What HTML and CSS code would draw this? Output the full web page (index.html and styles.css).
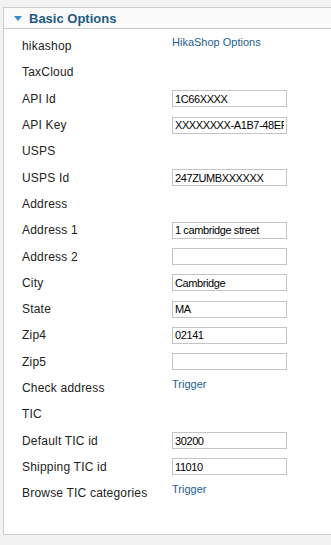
FILE: index.html
```html
<!DOCTYPE html>
<html>
<head>
<meta charset="utf-8">
<link rel="stylesheet" href="styles.css">
</head>
<body>
<div class="page">
  <div class="panel">
    <div class="panel-head">
      <svg class="toggle" width="8" height="5" viewBox="0 0 8 5"><path d="M0 0H8L4 5Z" fill="#3b8cc7"/></svg>
      <span class="panel-title">Basic Options</span>
    </div>
    <div class="panel-body">
      <div class="row"><span class="label">hikashop</span><span class="value link-cell"><a class="link">HikaShop Options</a></span></div>
      <div class="row"><span class="label">TaxCloud</span><span class="value"></span></div>
      <div class="row"><span class="label">API Id</span><span class="value"><input class="field" value="1C66XXXX"></span></div>
      <div class="row"><span class="label">API Key</span><span class="value"><input class="field" value="XXXXXXXX-A1B7-48EF-XXXX-XXXXXXXXXXXX"></span></div>
      <div class="row"><span class="label">USPS</span><span class="value"></span></div>
      <div class="row"><span class="label">USPS Id</span><span class="value"><input class="field" value="247ZUMBXXXXXX"></span></div>
      <div class="row"><span class="label">Address</span><span class="value"></span></div>
      <div class="row"><span class="label">Address 1</span><span class="value"><input class="field" value="1 cambridge street"></span></div>
      <div class="row"><span class="label">Address 2</span><span class="value"><input class="field" value=""></span></div>
      <div class="row"><span class="label">City</span><span class="value"><input class="field" value="Cambridge"></span></div>
      <div class="row"><span class="label">State</span><span class="value"><input class="field" value="MA"></span></div>
      <div class="row"><span class="label">Zip4</span><span class="value"><input class="field" value="02141"></span></div>
      <div class="row"><span class="label">Zip5</span><span class="value"><input class="field" value=""></span></div>
      <div class="row"><span class="label">Check address</span><span class="value link-cell"><a class="link">Trigger</a></span></div>
      <div class="row"><span class="label">TIC</span><span class="value"></span></div>
      <div class="row"><span class="label">Default TIC id</span><span class="value"><input class="field" value="30200"></span></div>
      <div class="row"><span class="label">Shipping TIC id</span><span class="value"><input class="field" value="11010"></span></div>
      <div class="row"><span class="label">Browse TIC categories</span><span class="value link-cell"><a class="link">Trigger</a></span></div>
    </div>
  </div>
</div>
</body>
</html>
```
FILE: styles.css
```css
html, body {
  margin: 0;
  padding: 0;
  background: #f2f2f2;
  overflow: hidden;
  font-family: "Liberation Sans", Arial, sans-serif;
}
.page {
  padding: 7px 0 0 3px;
  height: 545px;
  box-sizing: border-box;
}
.panel {
  background: #fff;
  border: 1px solid #cdcdcd;
  border-right: none;
}
.panel-head {
  height: 20px;
  background: #fafafa;
  border-bottom: 1px solid #cdcdcd;
  display: flex;
  align-items: center;
  padding-left: 10px;
}
.toggle {
  margin-right: 7px;
  margin-top: 1px;
}
.panel-title {
  font-size: 13px;
  font-weight: bold;
  color: #1f5a86;
}
.panel-body {
  padding: 4px 0 28px 18px;
}
.row {
  display: grid;
  grid-template-columns: 150px 1fr;
  height: 26.3px;
  align-items: center;
}
.label {
  font-size: 12px;
  letter-spacing: 0.2px;
  color: #222;
}
.value {
  display: flex;
  align-items: center;
}
.link-cell {
  align-self: start;
  padding-top: 3px;
}
.link {
  font-size: 11px;
  color: #24608f;
  text-decoration: none;
}
.field {
  width: 115px;
  height: 17px;
  box-sizing: border-box;
  border: 1px solid #c4c4c4;
  padding: 0 2px;
  margin: 0;
  font-family: "Liberation Sans", Arial, sans-serif;
  font-size: 11px;
  letter-spacing: -0.4px;
  color: #000;
  background: #fff;
  outline: none;
}
```
